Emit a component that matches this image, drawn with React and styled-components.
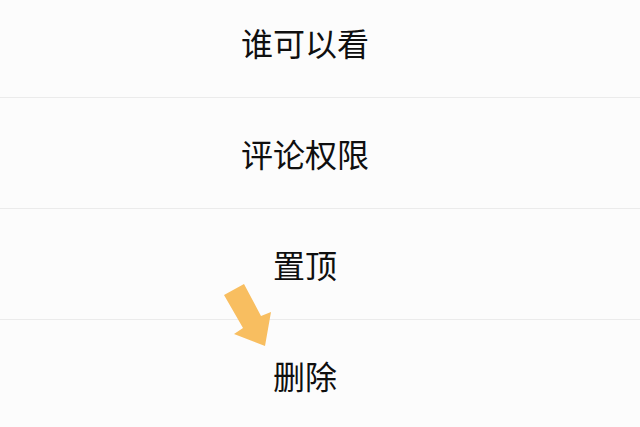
import React from "react";
import styled, { createGlobalStyle } from "styled-components";

const Global = createGlobalStyle`
  html, body { margin: 0; padding: 0; background: #fcfcfc; }
  body { font-family: "Noto Sans CJK SC", "Noto Sans", sans-serif; }
`;

const Page = styled.div`
  position: relative;
  width: 640px;
  height: 427px;
  overflow: hidden;
  background: #fcfcfc;
`;

const List = styled.ul`
  list-style: none;
  margin: -13px 0 0 0;
  padding: 0;
`;

const Row = styled.li`
  height: 111px;
  box-sizing: border-box;
  display: flex;
  align-items: center;
  justify-content: center;
  padding-right: 30px;
  border-bottom: 1px solid #ebebeb;
  font-size: 32px;
  color: #0f0f0f;
`;

const Arrow = styled.svg`
  position: absolute;
  left: 220px;
  top: 280px;
  width: 60px;
  height: 70px;
`;

const items = ["谁可以看", "评论权限", "置顶", "删除"];

export default function App() {
  return (
    <Page>
      <Global />
      <List>
        {items.map((t) => (
          <Row key={t}>{t}</Row>
        ))}
      </List>
      <Arrow viewBox="0 0 60 70">
        <polygon
          points="4,15 24,4 41,36 51,32 45,66 14,54 23,48"
          fill="#f8be60"
        />
      </Arrow>
    </Page>
  );
}
